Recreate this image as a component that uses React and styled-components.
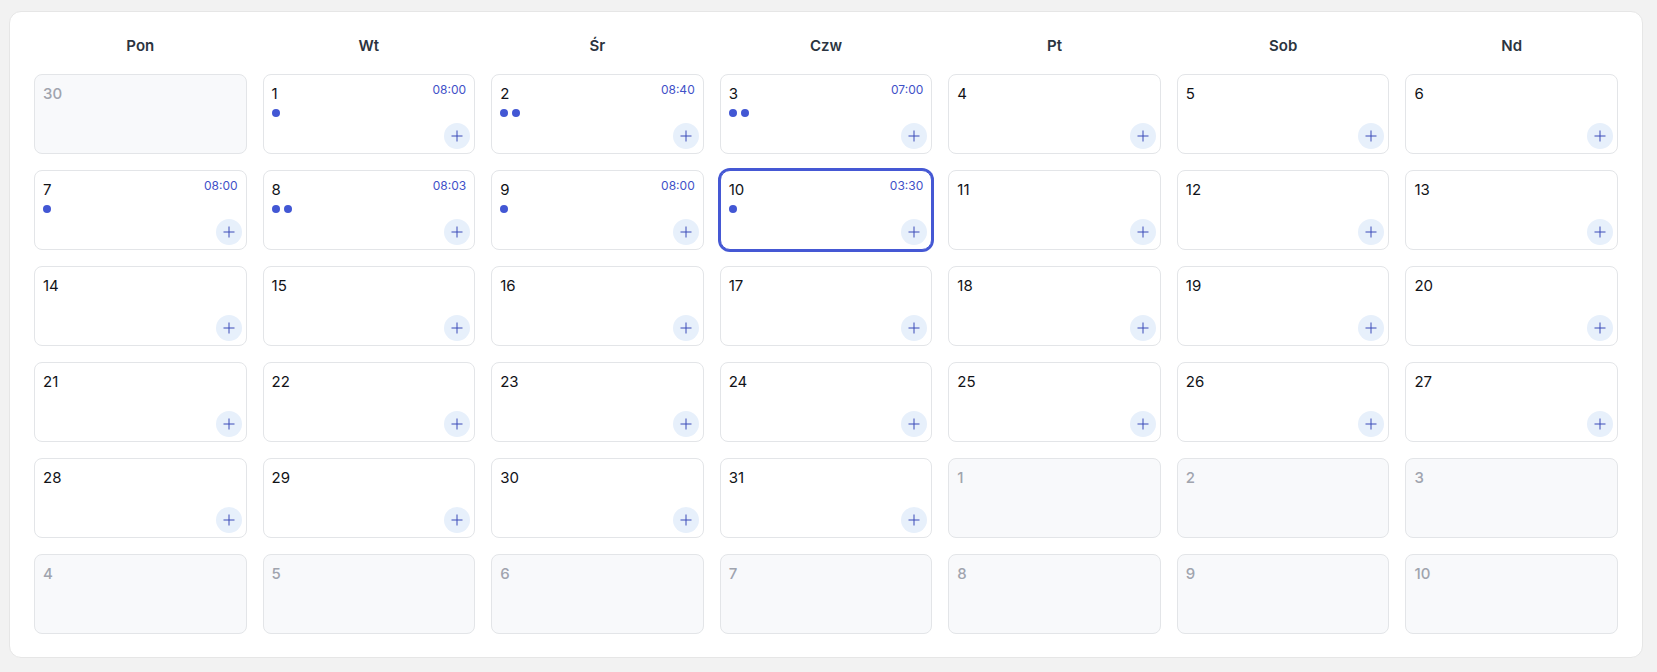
import React from "react";
import styled, { createGlobalStyle, css } from "styled-components";

const Global = createGlobalStyle`
  html, body { margin: 0; padding: 0; background: #f2f2f2; }
  body { font-family: Inter, "Noto Sans", "Liberation Sans", sans-serif; }
  #root { padding: 11px 14px 13px 9px; }
`;

const Panel = styled.div`
  width: 1634px;
  box-sizing: border-box;
  background: #ffffff;
  border: 1px solid #e6e6e6;
  border-radius: 12px;
  padding: 23px 24px 23px;
`;

const Grid = styled.div`
  display: grid;
  grid-template-columns: repeat(7, 1fr);
  column-gap: 16px;
  row-gap: 16px;
`;

const HeaderRow = styled(Grid)`
  margin-bottom: 17px;
`;

const DayName = styled.div`
  text-align: center;
  font-size: 15px;
  line-height: 22px;
  font-weight: 600;
  color: #2b3440;
`;

const Cell = styled.div`
  box-sizing: border-box;
  height: 80px;
  border: 1px solid #e3e5e8;
  border-radius: 8px;
  padding: 9px 8px 8px;
  display: flex;
  flex-direction: column;
  background: ${(p) => (p.$muted ? "#f8f9fb" : "#ffffff")};
  ${(p) =>
    p.$today &&
    css`
      border-color: #4558d4;
      border-radius: 10px;
      box-shadow: 0 0 0 2px #4558d4;
    `}
`;

const TopLine = styled.div`
  display: flex;
  justify-content: space-between;
  align-items: flex-start;
`;

const DayNum = styled.span`
  font-size: 15px;
  line-height: 20px;
  font-weight: ${(p) => (p.$muted ? 500 : 400)};
  color: ${(p) => (p.$muted ? "#a0a4ae" : "#111318")};
`;

const Time = styled.span`
  font-size: 12px;
  line-height: 14px;
  font-weight: 400;
  color: #3f51c8;
  margin-top: -1px;
`;

const Dots = styled.div`
  display: flex;
  gap: 4px;
  margin-top: 5px;
`;

const Dot = styled.span`
  width: 8px;
  height: 8px;
  border-radius: 50%;
  background: #4257d4;
`;

const AddButton = styled.button`
  margin: auto -4px -4px auto;
  width: 26px;
  height: 26px;
  border: none;
  border-radius: 50%;
  background: #e7f0fb;
  padding: 0;
  display: flex;
  align-items: center;
  justify-content: center;
  cursor: pointer;
`;

const PlusIcon = () => (
  <svg width="12" height="12" viewBox="0 0 12 12" fill="none">
    <path d="M6 0.5V11.5M0.5 6H11.5" stroke="#3a4ab8" strokeWidth="1" />
  </svg>
);

const days = ["Pon", "Wt", "Śr", "Czw", "Pt", "Sob", "Nd"];

const events = {
  1: { time: "08:00", dots: 1 },
  2: { time: "08:40", dots: 2 },
  3: { time: "07:00", dots: 2 },
  7: { time: "08:00", dots: 1 },
  8: { time: "08:03", dots: 2 },
  9: { time: "08:00", dots: 1 },
  10: { time: "03:30", dots: 1 },
};

const cells = [];
cells.push({ n: 30, muted: true });
for (let i = 1; i <= 31; i++) cells.push({ n: i, muted: false });
for (let i = 1; i <= 10; i++) cells.push({ n: i, muted: true });

export default function App() {
  return (
    <>
      <Global />
      <Panel>
        <HeaderRow>
          {days.map((d) => (
            <DayName key={d}>{d}</DayName>
          ))}
        </HeaderRow>
        <Grid>
          {cells.map((c, idx) => {
            const ev = !c.muted ? events[c.n] : null;
            return (
              <Cell key={idx} $muted={c.muted} $today={!c.muted && c.n === 10}>
                <TopLine>
                  <DayNum $muted={c.muted}>{c.n}</DayNum>
                  {ev && <Time>{ev.time}</Time>}
                </TopLine>
                {ev && (
                  <Dots>
                    {Array.from({ length: ev.dots }).map((_, i) => (
                      <Dot key={i} />
                    ))}
                  </Dots>
                )}
                {!c.muted && (
                  <AddButton aria-label="Dodaj">
                    <PlusIcon />
                  </AddButton>
                )}
              </Cell>
            );
          })}
        </Grid>
      </Panel>
    </>
  );
}
